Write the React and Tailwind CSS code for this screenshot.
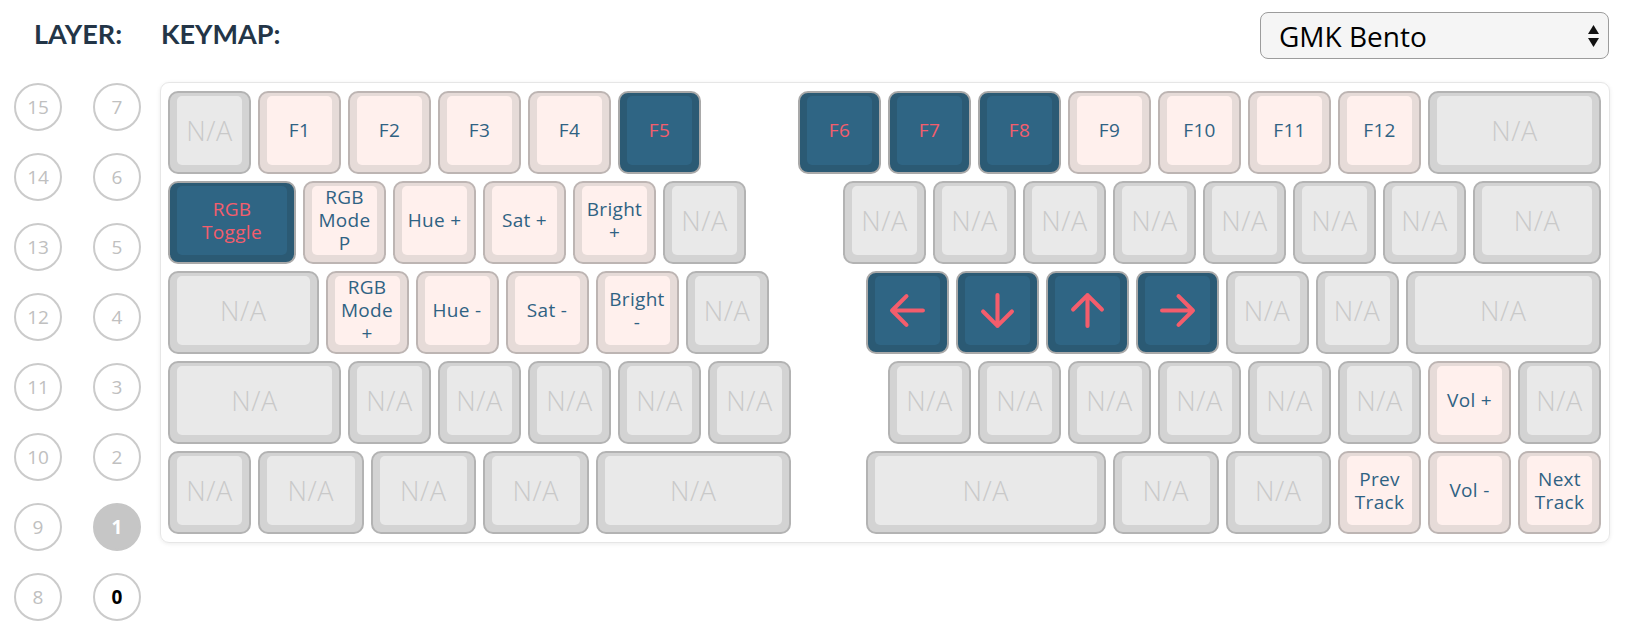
import { useState } from 'react';

// key widths: units of 90px pitch, minus the 7px gap
const WIDTH = {
  1: 'w-[83px]',
  1.25: 'w-[105.5px]',
  1.5: 'w-[128px]',
  1.75: 'w-[150.5px]',
  2: 'w-[173px]',
  2.25: 'w-[195.5px]',
  2.75: 'w-[240.5px]',
};

const SPACER = {
  1: 'w-[83px]',
  0.75: 'w-[60.5px]',
};

const STYLES = {
  na: {
    outer: 'bg-[#d3d3d3] border-[#b3b3b3]',
    inner: 'bg-[#e9e9e9] text-[#c9c9c9] text-[27px] font-light tracking-[0.5px]',
  },
  p: {
    outer: 'bg-[#e6dbd8] border-[#bdb5b3]',
    inner: 'bg-[#fff0ed] text-[#2f6283] text-[19px] tracking-[0.3px]',
  },
  d: {
    outer: 'bg-[#2b5a74] border-[#a9a9a9]',
    inner: 'bg-[#2f6584] text-[#f45d6c] text-[19px] tracking-[0.3px]',
  },
};

const NA = { l: 'N/A', t: 'na' };
const na = (w = 1) => ({ ...NA, w });
const p = (l, w = 1) => ({ l, t: 'p', w });
const d = (l, w = 1) => ({ l, t: 'd', w });
const gap = (s) => ({ spacer: s });

const ROWS = [
  [na(), p('F1'), p('F2'), p('F3'), p('F4'), d('F5'), gap(1),
    d('F6'), d('F7'), d('F8'), p('F9'), p('F10'), p('F11'), p('F12'), na(2)],
  [d('RGB\nToggle', 1.5), p('RGB\nMode\nP'), p('Hue +'), p('Sat +'), p('Bright\n+'), na(), gap(1),
    na(), na(), na(), na(), na(), na(), na(), na(1.5)],
  [na(1.75), p('RGB\nMode\n+'), p('Hue -'), p('Sat -'), p('Bright\n-'), na(), gap(1),
    d('left'), d('down'), d('up'), d('right'), na(), na(), na(2.25)],
  [na(2), na(), na(), na(), na(), na(), gap(1),
    na(), na(), na(), na(), na(), na(), p('Vol +'), na()],
  [na(), na(1.25), na(1.25), na(1.25), na(2.25), gap(0.75),
    na(2.75), na(1.25), na(1.25), p('Prev\nTrack'), p('Vol -'), p('Next\nTrack')],
];

const ARROWS = {
  left: 'M33 18H3M17 4L3 18l14 14',
  right: 'M3 18h30M19 4l14 14-14 14',
  up: 'M18 33V3M4 17L18 3l14 14',
  down: 'M18 3v30M4 19l14 14 14-14',
};

const Arrow = ({ dir }) => (
  <svg width="37" height="37" viewBox="0 0 36 36" fill="none" stroke="#f45d6c"
    strokeWidth="4" strokeLinecap="round" strokeLinejoin="round">
    <path d={ARROWS[dir]} />
  </svg>
);

const Key = ({ k }) => {
  const s = STYLES[k.t];
  const isArrow = ARROWS[k.l];
  return (
    <div className={`${WIDTH[k.w]} h-[83px] shrink-0 rounded-[10px] border-2 pt-[3px] px-[7px] pb-[7px] ${s.outer}`}>
      <div className={`h-full rounded-[5px] flex items-center justify-center text-center leading-[23px] whitespace-pre-line ${s.inner}`}>
        {isArrow ? <Arrow dir={k.l} /> : k.l}
      </div>
    </div>
  );
};

const LAYERS = [
  [15, 7], [14, 6], [13, 5], [12, 4], [11, 3], [10, 2], [9, 1], [8, 0],
];

const LayerButton = ({ n, active, current, onClick }) => (
  <button
    type="button"
    onClick={onClick}
    className={`w-[48px] h-[48px] rounded-full border-2 flex items-center justify-center text-[19px] ${
      active
        ? 'bg-[#c6c6c6] border-[#c6c6c6] text-white font-bold'
        : current
          ? 'border-[#cbcbcb] text-black font-bold'
          : 'border-[#cbcbcb] text-[#c0c0c0]'
    }`}
  >
    {n}
  </button>
);

export default function App() {
  const [layer, setLayer] = useState(1);

  return (
    <div className="w-[1636px] h-[636px] bg-white font-['Open_Sans',sans-serif] overflow-hidden">
      {/* header */}
      <div className="flex items-center pt-[12px] h-[59px]">
        <div className="w-[161px] pl-[34px] font-['Lato',sans-serif] font-bold text-[27px] text-[#233547] -mt-[3px]">
          LAYER:
        </div>
        <div className="font-['Lato',sans-serif] font-bold text-[27px] text-[#233547] -mt-[3px]">
          KEYMAP:
        </div>
        <div className="ml-auto mr-[27px] w-[349px] h-[47px] rounded-[8px] border-[1.5px] border-[#9c9c9c] bg-[#f5f5f5] flex items-center pl-[18px] pr-[8px]">
          <span className="text-[28px] text-black">GMK Bento</span>
          <svg className="ml-auto" width="13" height="24" viewBox="0 0 13 24" fill="#111">
            <path d="M6.5 1L12 10H1z" />
            <path d="M6.5 23L12 14H1z" />
          </svg>
        </div>
      </div>

      {/* body */}
      <div className="flex mt-[23px]">
        <div className="w-[160px] pl-[14px] pt-[1px]">
          <div className="grid grid-cols-[48px_48px] gap-x-[31px] gap-y-[22px]">
            {LAYERS.map(([a, b]) => [
              <LayerButton key={a} n={a} active={layer === a} onClick={() => setLayer(a)} />,
              <LayerButton key={b} n={b} active={layer === b} current={b === 0} onClick={() => setLayer(b)} />,
            ])}
          </div>
        </div>

        <div className="w-[1450px] h-[461px] rounded-[9px] border border-[#e6e6e6] shadow-[0_1px_4px_rgba(0,0,0,0.08)] pt-[8px] pl-[7px] pr-[7px] flex flex-col gap-[7px]">
          {ROWS.map((row, i) => (
            <div key={i} className="flex gap-[7px]">
              {row.map((k, j) =>
                k.spacer ? (
                  <div key={j} className={`${SPACER[k.spacer]} shrink-0`} />
                ) : (
                  <Key key={j} k={k} />
                )
              )}
            </div>
          ))}
        </div>
      </div>
    </div>
  );
}
